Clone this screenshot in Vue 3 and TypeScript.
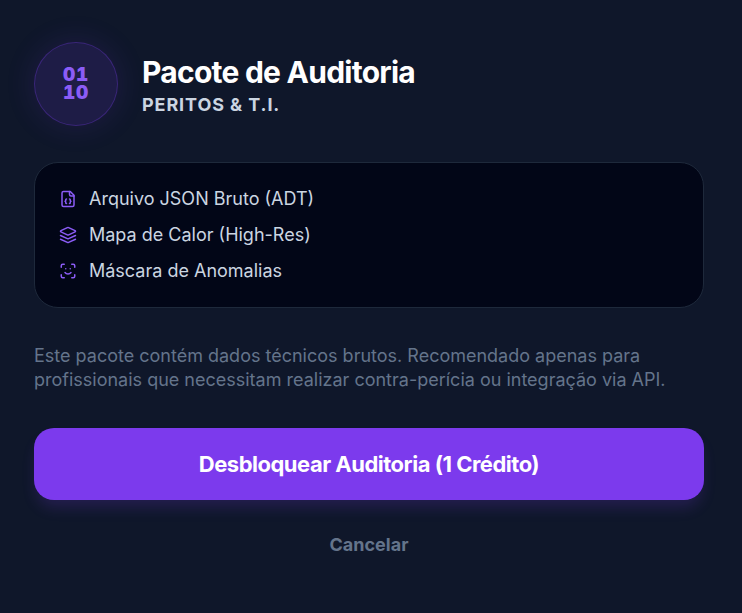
<script setup lang="ts">
const items: { label: string; icon: string }[] = [
  { label: 'Arquivo JSON Bruto (ADT)', icon: 'file' },
  { label: 'Mapa de Calor (High-Res)', icon: 'layers' },
  { label: 'Máscara de Anomalias', icon: 'scan' },
]
</script>

<template>
  <main class="card">
    <header class="head">
      <div class="badge"><span>01</span><span>10</span></div>
      <div class="titles">
        <h1>Pacote de Auditoria</h1>
        <p>PERITOS &amp; T.I.</p>
      </div>
    </header>

    <ul class="list">
      <li v-for="item in items" :key="item.label">
        <svg viewBox="0 0 24 24" class="ico" fill="none" stroke="currentColor" stroke-width="2" stroke-linecap="round" stroke-linejoin="round">
          <template v-if="item.icon === 'file'">
            <path d="M15 2H6a2 2 0 0 0-2 2v16a2 2 0 0 0 2 2h12a2 2 0 0 0 2-2V7Z" />
            <path d="M14 2v4a2 2 0 0 0 2 2h4" />
            <path d="M10 12a1 1 0 0 0-1 1v1a1 1 0 0 1-1 1 1 1 0 0 1 1 1v1a1 1 0 0 0 1 1" />
            <path d="M14 18a1 1 0 0 0 1-1v-1a1 1 0 0 1 1-1 1 1 0 0 1-1-1v-1a1 1 0 0 0-1-1" />
          </template>
          <template v-else-if="item.icon === 'layers'">
            <path d="m12.83 2.18a2 2 0 0 0-1.66 0L2.6 6.08a1 1 0 0 0 0 1.83l8.58 3.91a2 2 0 0 0 1.66 0l8.58-3.9a1 1 0 0 0 0-1.83Z" />
            <path d="m22 17.65-9.17 4.16a2 2 0 0 1-1.66 0L2 17.65" />
            <path d="m22 12.65-9.17 4.16a2 2 0 0 1-1.66 0L2 12.65" />
          </template>
          <template v-else>
            <path d="M3 7V5a2 2 0 0 1 2-2h2" />
            <path d="M17 3h2a2 2 0 0 1 2 2v2" />
            <path d="M21 17v2a2 2 0 0 1-2 2h-2" />
            <path d="M7 21H5a2 2 0 0 1-2-2v-2" />
            <path d="M8 14s1.5 2 4 2 4-2 4-2" />
            <path d="M9 9h.01" />
            <path d="M15 9h.01" />
          </template>
        </svg>
        <span>{{ item.label }}</span>
      </li>
    </ul>

    <p class="desc">Este pacote contém dados técnicos brutos. Recomendado apenas para profissionais que necessitam realizar contra-perícia ou integração via API.</p>

    <button class="cta" type="button">Desbloquear Auditoria (1 Crédito)</button>
    <button class="cancel" type="button">Cancelar</button>
  </main>
</template>

<style>
html, body { margin: 0; background: #0f172a; }
</style>

<style scoped>
.card {
  box-sizing: border-box;
  width: 742px;
  height: 613px;
  padding: 42px 38px 0 34px;
  background: #0f172a;
  font-family: Inter, "Noto Sans", sans-serif;
  display: flex;
  flex-direction: column;
}
.head { display: flex; align-items: center; gap: 24px; }
.badge {
  box-sizing: border-box;
  width: 84px;
  height: 84px;
  border-radius: 50%;
  background: rgba(124, 58, 237, 0.15);
  border: 1px solid rgba(124, 58, 237, 0.3);
  box-shadow: 0 0 30px rgba(124, 58, 237, 0.15);
  display: flex;
  flex-direction: column;
  align-items: center;
  justify-content: center;
  color: #8b5cf6;
  font-family: Inter, sans-serif;
  font-variant-numeric: tabular-nums;
  font-weight: 900;
  font-size: 19px;
  line-height: 18px;
  letter-spacing: 0.7px;
}
.badge span { display: block; }
.titles h1 {
  margin: 3px 0 0;
  color: #fff;
  font-size: 30px;
  line-height: 36px;
  font-weight: 700;
  letter-spacing: -0.75px;
}
.titles p {
  margin: 3px 0 0;
  color: #cbd5e1;
  font-size: 18px;
  line-height: 24px;
  font-weight: 700;
  letter-spacing: 0.9px;
}
.list {
  list-style: none;
  margin: 36px 0 0;
  padding: 23px 24px 25px;
  height: 146px;
  box-sizing: border-box;
  background: #020617;
  border: 1px solid #1e293b;
  border-radius: 24px;
  display: flex;
  flex-direction: column;
  gap: 12px;
}
.list li {
  display: flex;
  align-items: center;
  gap: 12px;
  height: 24px;
  color: #cbd5e1;
  font-size: 18px;
  font-weight: 400;
}
.ico { width: 18px; height: 18px; margin-top: 2px; color: #8b5cf6; flex: none; }
.desc {
  margin: 36px 0 0;
  color: #64748b;
  font-size: 18px;
  line-height: 24px;
}
.cta {
  margin-top: 36px;
  height: 72px;
  border: 0;
  border-radius: 20px;
  background: #7c3aed;
  color: #fff;
  font: 700 22px Inter, sans-serif;
  letter-spacing: -0.5px;
  box-shadow: 0 10px 15px -3px rgba(124, 58, 237, 0.2);
}
.cancel {
  margin-top: 33px;
  align-self: center;
  border: 0;
  background: none;
  padding: 0;
  color: #64748b;
  font: 700 18px/24px Inter, sans-serif;
}
</style>
